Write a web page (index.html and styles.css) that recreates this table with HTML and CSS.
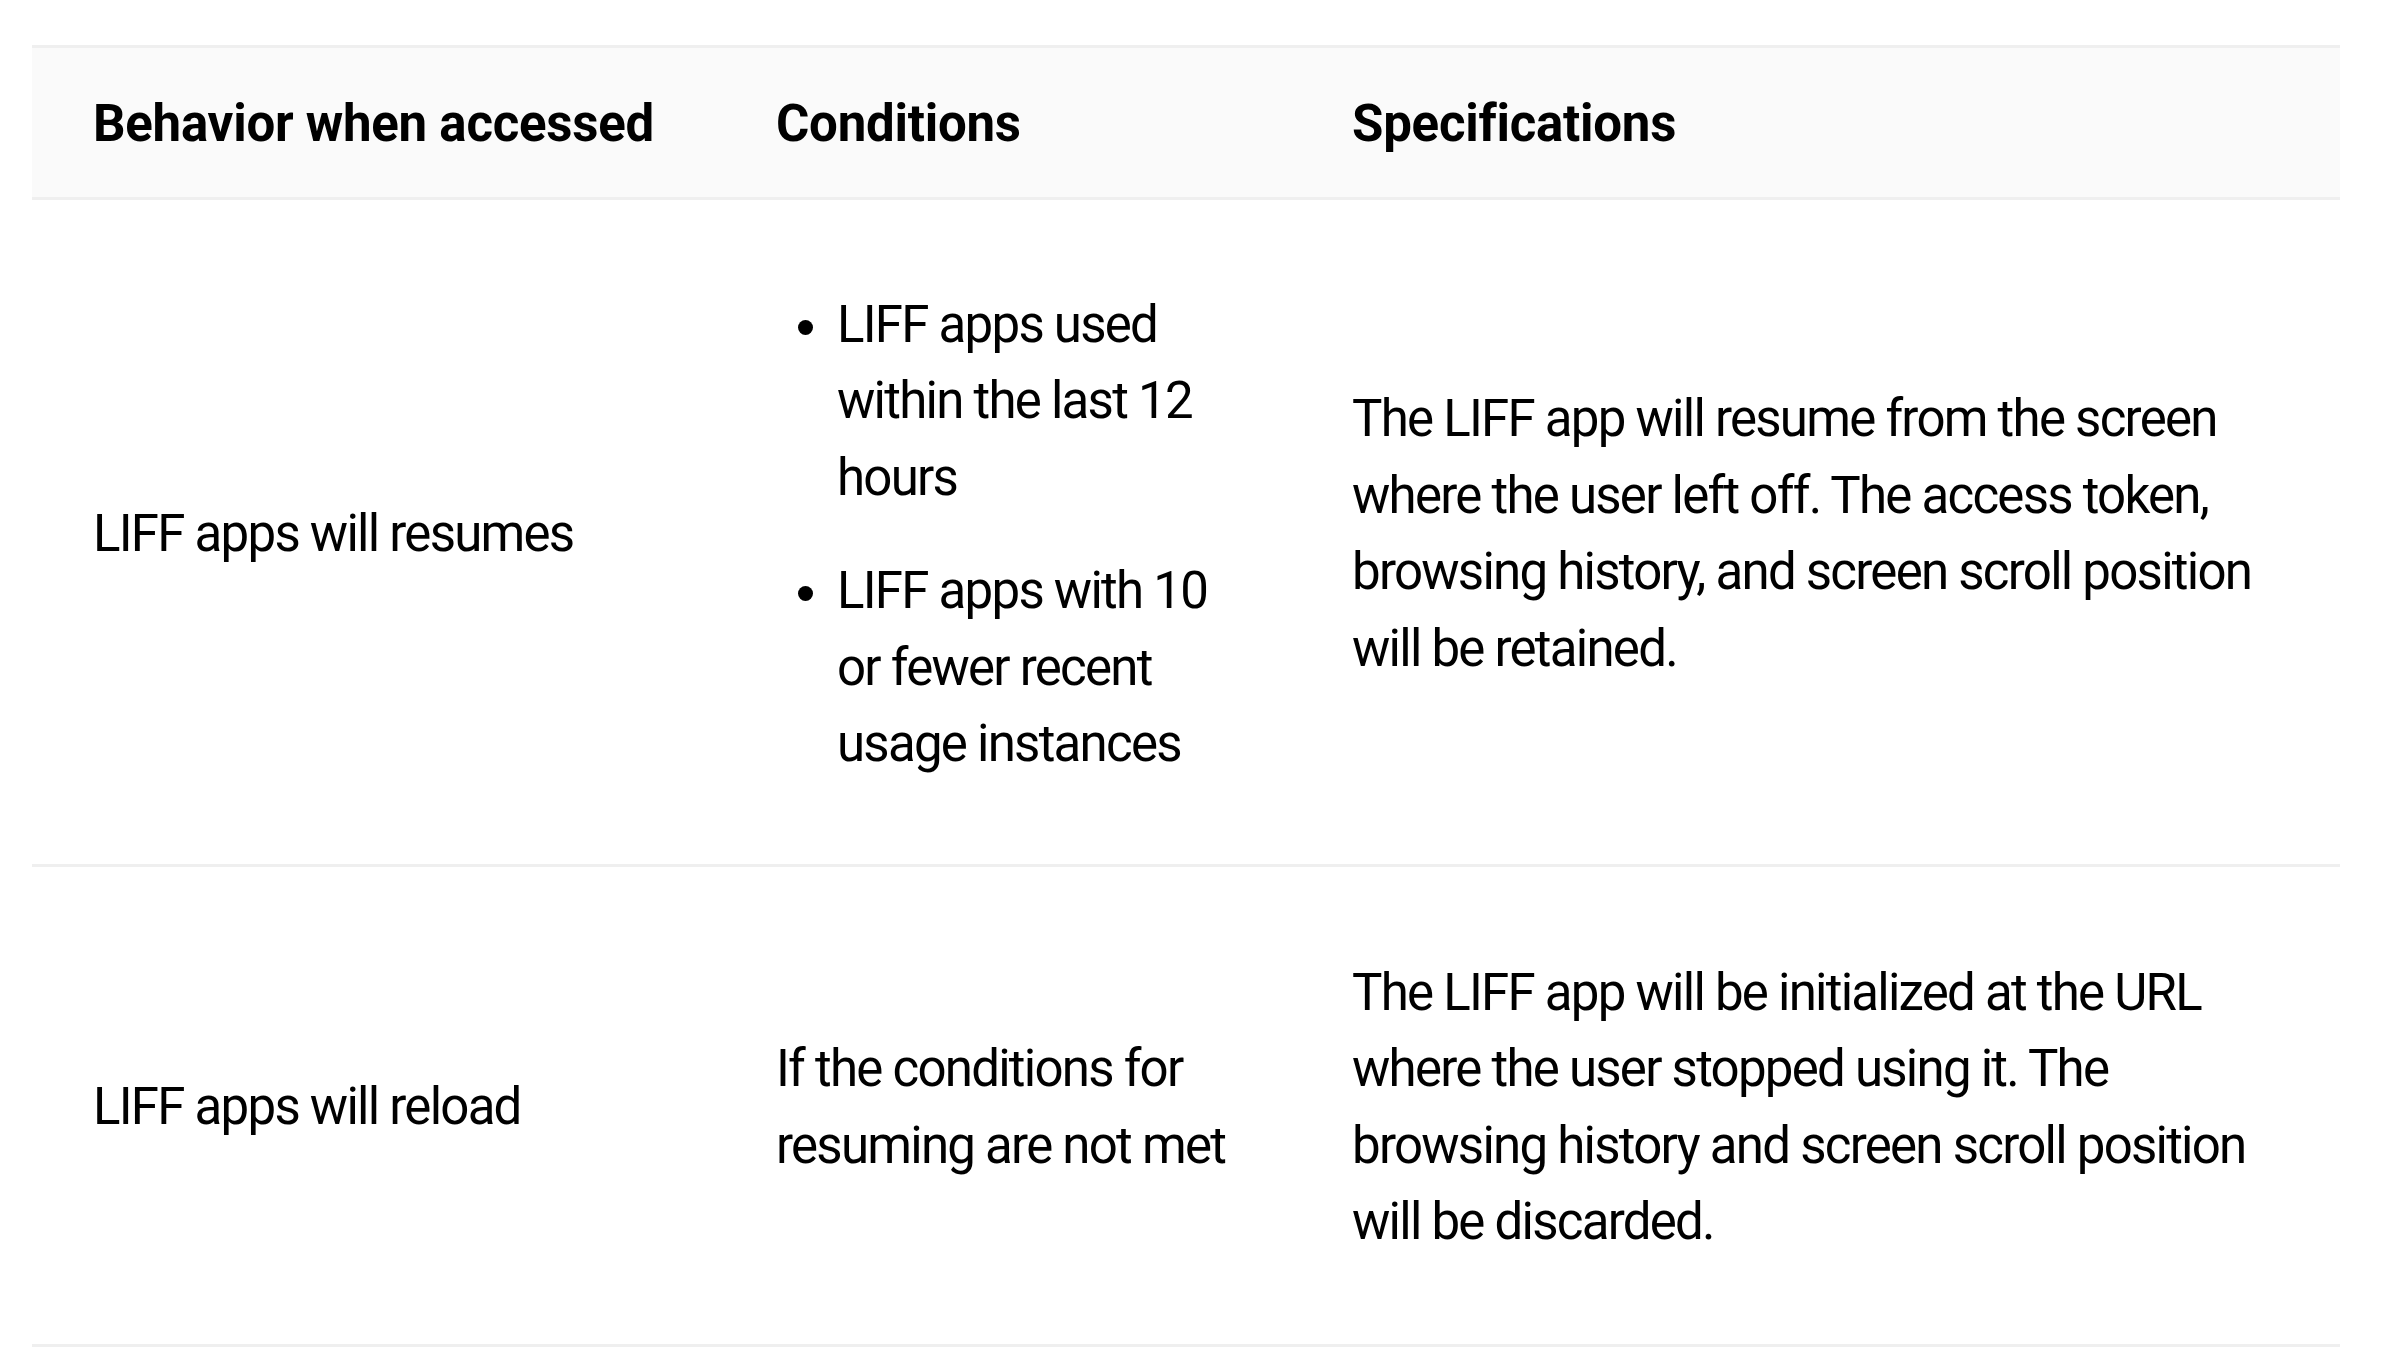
FILE: index.html
```html
<!DOCTYPE html>
<html lang="en">
<head>
<meta charset="utf-8">
<title>LIFF app behavior</title>
<link rel="stylesheet" href="styles.css">
</head>
<body>
<div class="page">
  <table class="spec-table">
    <colgroup>
      <col class="col-behavior">
      <col class="col-conditions">
      <col class="col-specs">
    </colgroup>
    <thead>
      <tr>
        <th>Behavior when accessed</th>
        <th>Conditions</th>
        <th>Specifications</th>
      </tr>
    </thead>
    <tbody>
      <tr>
        <td><p>LIFF apps will resumes</p></td>
        <td>
          <ul class="cond-list">
            <li>LIFF apps used within the last 12 hours</li>
            <li>LIFF apps with 10 or fewer recent usage instances</li>
          </ul>
        </td>
        <td><p>The LIFF app will resume from the screen where the user left off. The access token, browsing history, and screen scroll position will be retained.</p></td>
      </tr>
      <tr>
        <td><p>LIFF apps will reload</p></td>
        <td><p>If the conditions for resuming are not met</p></td>
        <td><p>The LIFF app will be initialized at the URL where the user stopped using it. The browsing history and screen scroll position will be discarded.</p></td>
      </tr>
    </tbody>
  </table>
</div>
</body>
</html>
```
FILE: styles.css
```css
html, body {
  margin: 0;
  padding: 0;
  background: #ffffff;
}

body {
  font-family: Roboto, "Noto Sans", "Liberation Sans", sans-serif;
  font-size: 51px;
  line-height: 76.5px;
  color: #000000;
  letter-spacing: -1.75px;
}

.page {
  padding: 45px 46px 20px 32px;
}

.spec-table {
  width: 100%;
  table-layout: fixed;
  border-collapse: collapse;
  border-top: 3px solid #efefef;
}

.col-behavior { width: 683px; }
.col-conditions { width: 576px; }
.col-specs { width: 1049px; }

.spec-table th {
  background: #fafafa;
  font-weight: 700;
  letter-spacing: -0.25px;
  text-align: left;
  padding: 37.5px 30px 34.5px 61px;
  border-bottom: 3px solid #efefef;
  vertical-align: middle;
}

.spec-table td {
  padding: 36px 50px 36px 61px;
  border-bottom: 3px solid #efefef;
  vertical-align: middle;
}

.spec-table p {
  margin: 52px 0 47px;
}

.cond-list {
  list-style: none;
  margin: 51px 0 45px;
  padding: 0;
}

.cond-list li {
  position: relative;
  padding-left: 61px;
}

.cond-list li + li {
  margin-top: 37px;
}

.cond-list li::before {
  content: "";
  position: absolute;
  left: 22px;
  top: 33px;
  width: 15px;
  height: 15px;
  border-radius: 50%;
  background: #000000;
}
```
